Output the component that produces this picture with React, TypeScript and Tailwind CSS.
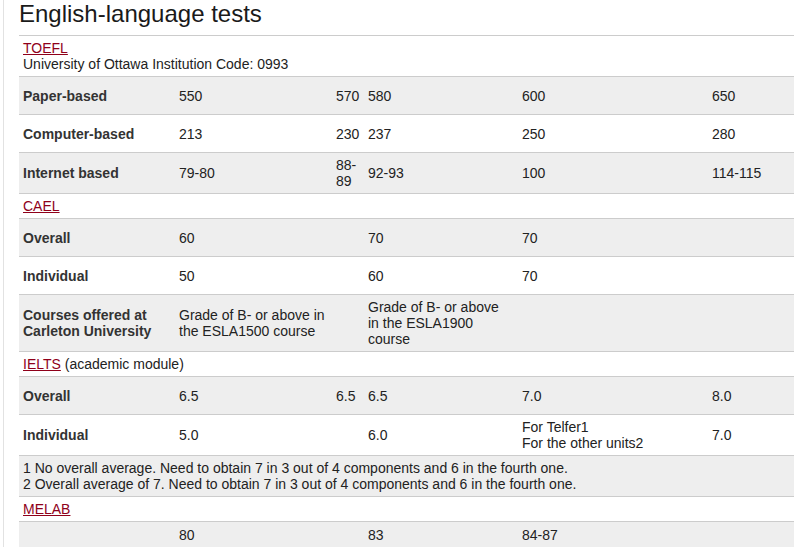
import React from "react";

const link = "text-[#8f001a] underline";
const cell = "px-1 py-1 border-t border-[#cccccc] align-middle";
const lab = "font-bold text-[#333333]";

function DataRow({ gray, cells }: { gray?: boolean; cells: React.ReactNode[] }) {
  return (
    <tr className={gray ? "bg-[#eeeeee]" : "bg-white"}>
      {cells.map((c, i) => (
        <td key={i} className={`${cell} h-[38px] ${i === 0 ? lab : ""}`}>
          {c}
        </td>
      ))}
    </tr>
  );
}

function HeadRow({ children, gray }: { children: React.ReactNode; gray?: boolean }) {
  return (
    <tr className={gray ? "bg-[#eeeeee]" : "bg-white"}>
      <td colSpan={6} className={cell}>
        {children}
      </td>
    </tr>
  );
}

export default function App() {
  return (
    <div
      className="w-[809px] h-[547px] overflow-hidden bg-white pl-[3px] text-[#222222]"
      style={{ fontFamily: '"Liberation Sans", Arial, sans-serif' }}
    >
      <div className="h-full border-l border-[#e2e2e2] pl-[15px]">
        <h1 className="text-[24px] leading-[28px] mb-[7px] font-normal text-[#1a1a1a]">
          English-language tests
        </h1>
        <table className="table-fixed border-collapse w-[775px] text-[14px] leading-4">
          <colgroup>
            <col className="w-[156px]" />
            <col className="w-[157px]" />
            <col className="w-[32px]" />
            <col className="w-[154px]" />
            <col className="w-[190px]" />
            <col className="w-[86px]" />
          </colgroup>
          <tbody>
            <HeadRow>
              <span className={link}>TOEFL</span>
              <br />
              University of Ottawa Institution Code: 0993
            </HeadRow>
            <DataRow gray cells={["Paper-based", "550", "570", "580", "600", "650"]} />
            <DataRow cells={["Computer-based", "213", "230", "237", "250", "280"]} />
            <DataRow gray cells={["Internet based", "79-80", "88-89", "92-93", "100", "114-115"]} />
            <HeadRow>
              <span className={link}>CAEL</span>
            </HeadRow>
            <DataRow gray cells={["Overall", "60", "", "70", "70", ""]} />
            <DataRow cells={["Individual", "50", "", "60", "70", ""]} />
            <tr className="bg-[#eeeeee]">
              <td className={`${cell} ${lab}`}>
                Courses offered at Carleton University
              </td>
              <td className={cell}>
                Grade of B- or above in the ESLA1500 course
              </td>
              <td className={cell}></td>
              <td className={`${cell} pr-[16px]`}>Grade of B- or above in the ESLA1900 course</td>
              <td className={cell}></td>
              <td className={cell}></td>
            </tr>
            <HeadRow>
              <span className={link}>IELTS</span> (academic module)
            </HeadRow>
            <DataRow gray cells={["Overall", "6.5", "6.5", "6.5", "7.0", "8.0"]} />
            <DataRow
              cells={[
                "Individual",
                "5.0",
                "",
                "6.0",
                <>
                  For Telfer1
                  <br />
                  For the other units2
                </>,
                "7.0",
              ]}
            />
            <HeadRow gray>
              1 No overall average. Need to obtain 7 in 3 out of 4 components and 6 in the fourth one.
              <br />
              2 Overall average of 7. Need to obtain 7 in 3 out of 4 components and 6 in the fourth one.
            </HeadRow>
            <HeadRow>
              <span className={link}>MELAB</span>
            </HeadRow>
            <tr className="bg-[#eeeeee]">
              <td className={`${cell} border-b h-[26px]`}></td>
              <td className={`${cell} border-b`}>80</td>
              <td className={`${cell} border-b`}></td>
              <td className={`${cell} border-b`}>83</td>
              <td className={`${cell} border-b`}>84-87</td>
              <td className={`${cell} border-b`}></td>
            </tr>
          </tbody>
        </table>
      </div>
    </div>
  );
}
